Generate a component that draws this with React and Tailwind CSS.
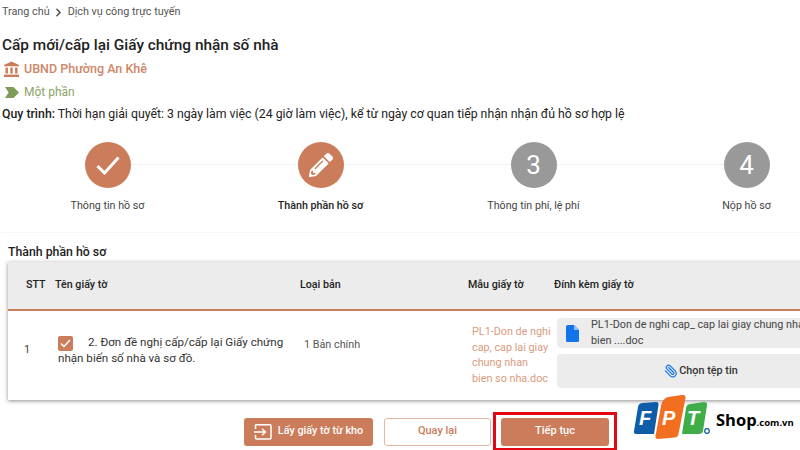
import React from "react";
import { ChevronRight, Paperclip } from "lucide-react";
import { FaPencilAlt } from "react-icons/fa";

const Bank = () => (
  <svg width="17" height="17" viewBox="0 0 17 17" fill="#c97b5a">
    <path d="M8.500 0.500 L16 4 V5.200 H1 V4 Z" />
    <rect x="2.500" y="6.500" width="2.400" height="6" />
    <rect x="7.300" y="6.500" width="2.400" height="6" />
    <rect x="12.100" y="6.500" width="2.400" height="6" />
    <rect x="1" y="13.600" width="15" height="2.400" />
  </svg>
);

const Arrow = () => (
  <svg width="14" height="11" viewBox="0 0 14 11" fill="#7f9c5a">
    <path d="M0 0 H8.500 L14 5.500 L8.500 11 H0 L3.600 5.500 Z" />
  </svg>
);

const Doc = () => (
  <svg width="13" height="17" viewBox="0 0 13 17" fill="#1273eb">
    <path d="M2 0 H8 L13 5 V15.500 A1.500 1.500 0 0 1 11.500 17 H1.500 A1.500 1.500 0 0 1 0 15.500 V2 A2 2 0 0 1 2 0 Z" />
    <path d="M8 0 V5 H13" fill="#8fbcf5" />
  </svg>
);

const Tick = () => (
  <svg width="24" height="19" viewBox="0 0 24 19" fill="none" stroke="#fff" strokeWidth="3">
    <path d="M1.500 10 L8.500 17 L22.500 1.500" />
  </svg>
);

const ImportIcon = () => (
  <svg width="18" height="16" viewBox="0 0 18 16" fill="none" stroke="#fff" strokeWidth="1.500">
    <path d="M1.500 5 V1.500 Q1.500 0.800 2.500 0.800 H16 Q17 0.800 17 1.800 V14 Q17 15 16 15 H2.500 Q1.500 15 1.500 14 V11" />
    <path d="M0 8 H11 M8 4.800 L11.500 8 L8 11.200" />
  </svg>
);

const Logo = () => (
  <div className="absolute left-[632px] top-[393px] flex items-start">
    <svg width="78" height="48" viewBox="0 0 78 48">
      <path d="M10 10 L24 9 Q27 9 26.500 12 L22 41 H4 Q1.500 41 2 38 L6 14 Q6.500 10.500 10 10 Z" fill="#0f5ca8" />
      <path d="M36 4 L50 2 Q54 1.500 53.500 5 L46.500 41 Q46 44 43 44.500 L26 46 Q23 46 23.500 43 L29 13 Q30 6 36 4 Z" fill="#f26f21" />
      <path d="M58 11 L72 9 Q75.500 9 75 12 L71 38 Q70.500 41 67 41 H50 L54 15 Q54.500 11.500 58 11 Z" fill="#3fae49" />
      <text x="7" y="32" fontFamily="Liberation Sans, sans-serif" fontWeight="700" fontStyle="italic" fontSize="20" fill="#fff">F</text>
      <text x="30" y="32" fontFamily="Liberation Sans, sans-serif" fontWeight="700" fontStyle="italic" fontSize="20" fill="#fff">P</text>
      <text x="55" y="32" fontFamily="Liberation Sans, sans-serif" fontWeight="700" fontStyle="italic" fontSize="20" fill="#fff">T</text>
      <circle cx="75" cy="38" r="2.300" fill="none" stroke="#0f5ca8" strokeWidth="1.200" />
    </svg>
    <div className="ml-[6px] mt-[19px] flex items-baseline text-black font-bold whitespace-nowrap font-['Open_Sans',sans-serif] leading-none">
      <span className="text-[16.500px]">Shop</span>
      <span className="text-[9.500px]">.com.vn</span>
    </div>
  </div>
);

const Step = ({ circle, children, label, bold }) => (
  <div className="flex flex-col items-center relative">
    <div className={`z-10 w-[46px] h-[46px] rounded-full flex items-center justify-center text-white ${circle}`}>
      {children}
    </div>
    <div className={`mt-[10px] text-[10.700px] leading-[16px] whitespace-nowrap ${bold ? "font-medium text-[#222]" : "text-[#444]"}`}>
      {label}
    </div>
  </div>
);

export default function App() {
  return (
    <div className="relative w-[800px] h-[450px] overflow-hidden bg-white font-['Roboto',sans-serif] text-[#222]">
      <div className="flex items-center h-[14px] mt-[5px] ml-[2px] text-[10.800px] text-[#555]">
        <span>Trang chủ</span>
        <ChevronRight size={13} strokeWidth={2.500} className="ml-[2px] mr-[3px] text-[#444]" />
        <span>Dịch vụ công trực tuyến</span>
      </div>

      <h1 className="ml-[2px] mt-[16px] text-[15.400px] leading-[20px] font-medium text-[#222]">
        Cấp mới/cấp lại Giấy chứng nhận số nhà
      </h1>

      <div className="flex items-center gap-[4px] ml-[3px] mt-[5px] h-[18px] text-[12.500px] font-medium text-[#cf8566] whitespace-nowrap">
        <Bank />
        <span>UBND Phường An Khê</span>
      </div>

      <div className="flex items-center gap-[5px] ml-[5px] mt-[5px] h-[18px] text-[12px] text-[#8aa568]">
        <Arrow />
        <span>Một phần</span>
      </div>

      <p className="ml-[2px] mt-[4px] h-[18px] text-[12.300px] leading-[18px] text-[#222] whitespace-nowrap">
        <span className="font-medium">Quy trình:</span> Thời hạn giải quyết: 3 ngày làm việc (24 giờ làm việc), kể từ ngày cơ quan tiếp nhận nhận đủ hồ sơ hợp lệ
      </p>

      <div className="relative w-[852px] mt-[19px] ml-[1px] grid grid-cols-4 pb-[18px] border-b border-[#f6f6f6]">
        <div className="absolute left-[106px] right-[106px] top-[22px] h-[1px] bg-[#f0f0f0]" />
        <Step circle="bg-[#cb7c5a]" label="Thông tin hồ sơ">
          <Tick />
        </Step>
        <Step circle="bg-[#cb7c5a]" label="Thành phần hồ sơ" bold>
          <FaPencilAlt size={24} />
        </Step>
        <Step circle="bg-[#999999]" label="Thông tin phí, lệ phí">
          <span className="text-[26px] leading-none">3</span>
        </Step>
        <Step circle="bg-[#999999]" label="Nộp hồ sơ">
          <span className="text-[26px] leading-none">4</span>
        </Step>
      </div>

      <div className="ml-[8px] mt-[10px] h-[19px] text-[12.300px] leading-[18px] font-medium text-[#222]">
        Thành phần hồ sơ
      </div>

      <div className="ml-[8px] w-[830px] shadow-[0_1px_4px_rgba(0,0,0,0.45)]">
        <div className="flex items-center h-[47px] bg-[#ececec] border-b-[2px] border-[#cb7c5a] box-content text-[10.700px] font-medium text-[#222]">
          <div className="w-[47px] shrink-0 pl-[18px]">STT</div>
          <div className="w-[245px] shrink-0">Tên giấy tờ</div>
          <div className="w-[168px] shrink-0">Loại bản</div>
          <div className="w-[86px] shrink-0">Mẫu giấy tờ</div>
          <div className="shrink-0">Đính kèm giấy tờ</div>
        </div>

        <div className="flex h-[89px] bg-white">
          <div className="w-[47px] shrink-0 pl-[16px] pt-[31px] text-[11px] text-[#444] leading-[16px]">1</div>
          <div className="w-[249px] shrink-0 pl-[3px] pt-[23px] pr-[6px] text-[11.600px] leading-[16px] text-[#333]">
            <span className="inline-flex items-center justify-center align-top translate-y-[2px] w-[15px] h-[15px] mr-[15px] rounded-[2px] bg-[#cb7c5a] text-white">
              <svg width="11" height="9" viewBox="0 0 11 9" fill="none" stroke="#fff" strokeWidth="1.500"><path d="M1 4.500 L4 7.500 L10 1" /></svg>
            </span>
            2. Đơn đề nghị cấp/cấp lại Giấy chứng nhận biến số nhà và sơ đồ.
          </div>
          <div className="w-[168px] shrink-0 pt-[26px] text-[10.800px] text-[#555] leading-[16px]">1 Bản chính</div>
          <div className="w-[85px] shrink-0 pt-[13px] pr-[6px] text-[10.800px] leading-[15.500px] text-[#d99b80]">
            PL1-Don de nghi cap, cap lai giay chung nhan bien so nha.doc
          </div>
          <div className="w-[288px] shrink-0 pt-[7px] text-[10.800px] flex flex-col gap-[6px]">
            <div className="flex items-center h-[30px] rounded-[4px] bg-[#ececec]">
              <span className="ml-[9px] mr-[12px] shrink-0 flex"><Doc /></span>
              <span className="leading-[16px] text-[#444] w-[255px] shrink-0">
                PL1-Don de nghi cap_ cap lai giay chung nhan so nha bien ....doc
              </span>
            </div>
            <div className="flex items-center justify-center h-[34px] rounded-[4px] bg-[#ececec] text-[#333] font-medium">
              <Paperclip size={14} strokeWidth={2} className="text-[#1273eb] -scale-x-100 mr-[1px]" />
              Chọn tệp tin
            </div>
          </div>
        </div>
      </div>

      <div className="flex items-center h-[39px] ml-[244px] mt-[12px] text-[11px] font-medium">
        <button className="flex items-center justify-center gap-[6px] w-[129px] h-[28px] rounded-[3px] bg-[#cb7c5a] text-white text-[10.800px]">
          <ImportIcon />
          Lấy giấy tờ từ kho
        </button>
        <button className="ml-[11px] w-[107px] h-[28px] rounded-[3px] bg-white border border-[#e3b8a5] text-[#cb7c5a]">
          Quay lại
        </button>
        <div className="ml-[2px] flex items-center justify-center w-[124px] h-[39px] border-[3.500px] border-[#e30613]">
          <button className="w-[108px] h-[28px] rounded-[3px] bg-[#cb7c5a] text-white">
            Tiếp tục
          </button>
        </div>
      </div>

      <Logo />
    </div>
  );
}
